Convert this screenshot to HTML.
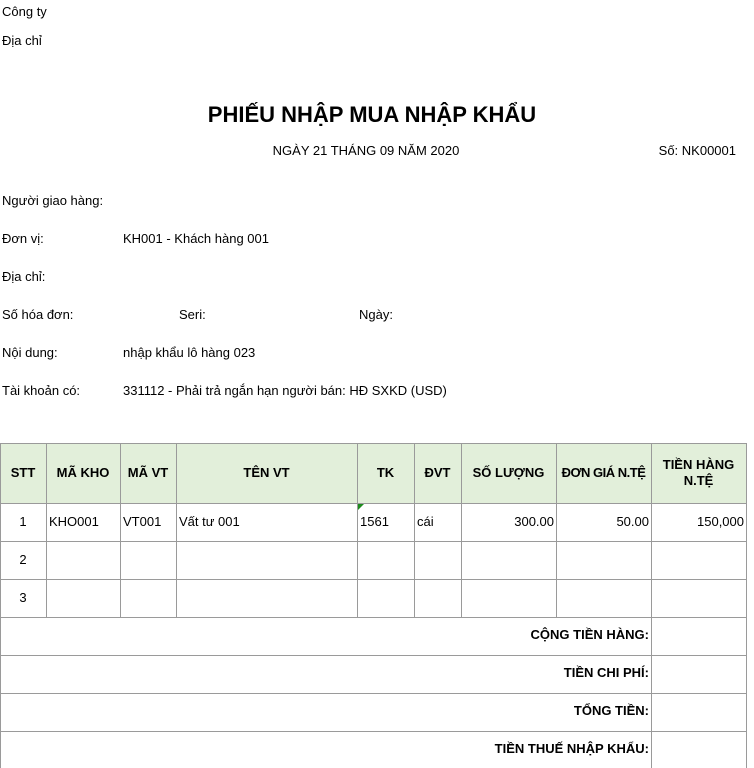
<!DOCTYPE html>
<html><head><meta charset="utf-8"><style>
body{margin:0;width:754px;height:768px;background:#fff;position:relative;overflow:hidden;font-family:"Liberation Sans",Arial,sans-serif;font-size:13px;color:#000}
.t{position:absolute;white-space:nowrap;line-height:16px}
.v{position:absolute;width:1px;background:#9a9a9a}
.h{position:absolute;height:1px;background:#9a9a9a;left:0;width:747px}
.b{font-weight:bold;font-size:13px}
</style></head><body>
<div class="t" style="left:2px;top:4px">Công ty</div>
<div class="t" style="left:2px;top:33px">Địa chỉ</div>
<div class="t" style="left:0;width:744px;text-align:center;top:103px;font-weight:bold;font-size:22px;line-height:24px">PHIẾU NHẬP MUA NHẬP KHẨU</div>
<div class="t" style="left:0;width:732px;text-align:center;top:143px">NGÀY 21 THÁNG 09 NĂM 2020</div>
<div class="t" style="right:18px;top:143px">Số: NK00001</div>
<div class="t" style="left:2px;top:193px">Người giao hàng:</div>
<div class="t" style="left:2px;top:231px">Đơn vị:</div>
<div class="t" style="left:123px;top:231px">KH001 - Khách hàng 001</div>
<div class="t" style="left:2px;top:269px">Địa chỉ:</div>
<div class="t" style="left:2px;top:307px">Số hóa đơn:</div>
<div class="t" style="left:179px;top:307px">Seri:</div>
<div class="t" style="left:359px;top:307px">Ngày:</div>
<div class="t" style="left:2px;top:345px">Nội dung:</div>
<div class="t" style="left:123px;top:345px">nhập khẩu lô hàng 023</div>
<div class="t" style="left:2px;top:383px">Tài khoản có:</div>
<div class="t" style="left:123px;top:383px">331112 - Phải trả ngắn hạn người bán: HĐ SXKD (USD)</div>

<div style="position:absolute;left:0;top:443px;width:747px;height:60px;background:#e2efda"></div>
<div class="h" style="top:443px"></div>
<div class="h" style="top:503px"></div>
<div class="h" style="top:541px"></div>
<div class="h" style="top:579px"></div>
<div class="h" style="top:617px"></div>
<div class="h" style="top:655px"></div>
<div class="h" style="top:693px"></div>
<div class="h" style="top:731px"></div>
<div class="v" style="left:0;top:443px;height:325px"></div>
<div class="v" style="left:46px;top:443px;height:174px"></div>
<div class="v" style="left:120px;top:443px;height:174px"></div>
<div class="v" style="left:176px;top:443px;height:174px"></div>
<div class="v" style="left:357px;top:443px;height:174px"></div>
<div class="v" style="left:414px;top:443px;height:174px"></div>
<div class="v" style="left:461px;top:443px;height:174px"></div>
<div class="v" style="left:556px;top:443px;height:174px"></div>
<div class="v" style="left:651px;top:443px;height:325px"></div>
<div class="v" style="left:746px;top:443px;height:325px"></div>

<div class="t b" style="left:0;width:46px;text-align:center;top:465px">STT</div>
<div class="t b" style="left:46px;width:74px;text-align:center;top:465px">MÃ KHO</div>
<div class="t b" style="left:120px;width:56px;text-align:center;top:465px">MÃ VT</div>
<div class="t b" style="left:176px;width:181px;text-align:center;top:465px">TÊN VT</div>
<div class="t b" style="left:357px;width:57px;text-align:center;top:465px">TK</div>
<div class="t b" style="left:414px;width:47px;text-align:center;top:465px">ĐVT</div>
<div class="t b" style="left:461px;width:95px;text-align:center;top:465px">SỐ LƯỢNG</div>
<div class="t b" style="left:556px;width:95px;text-align:center;top:465px;letter-spacing:-0.5px">ĐƠN GIÁ N.TỆ</div>
<div class="t b" style="left:651px;width:95px;text-align:center;top:457px;line-height:16px;white-space:normal">TIỀN HÀNG<br>N.TỆ</div>

<div class="t" style="left:0;width:46px;text-align:center;top:514px">1</div>
<div class="t" style="left:49px;top:514px">KHO001</div>
<div class="t" style="left:123px;top:514px">VT001</div>
<div class="t" style="left:179px;top:514px">Vất tư 001</div>
<div style="position:absolute;left:358px;top:504px;width:0;height:0;border-top:6px solid #1e8c1e;border-right:6px solid transparent"></div>
<div class="t" style="left:360px;top:514px">1561</div>
<div class="t" style="left:417px;top:514px">cái</div>
<div class="t" style="right:200px;top:514px">300.00</div>
<div class="t" style="right:105px;top:514px">50.00</div>
<div class="t" style="right:10px;top:514px">150,000</div>
<div class="t" style="left:0;width:46px;text-align:center;top:552px">2</div>
<div class="t" style="left:0;width:46px;text-align:center;top:590px">3</div>

<div class="t b" style="right:105px;top:627px">CỘNG TIỀN HÀNG:</div>
<div class="t b" style="right:105px;top:665px">TIỀN CHI PHÍ:</div>
<div class="t b" style="right:105px;top:703px">TỔNG TIỀN:</div>
<div class="t b" style="right:105px;top:741px">TIỀN THUẾ NHẬP KHẨU:</div>
</body></html>
